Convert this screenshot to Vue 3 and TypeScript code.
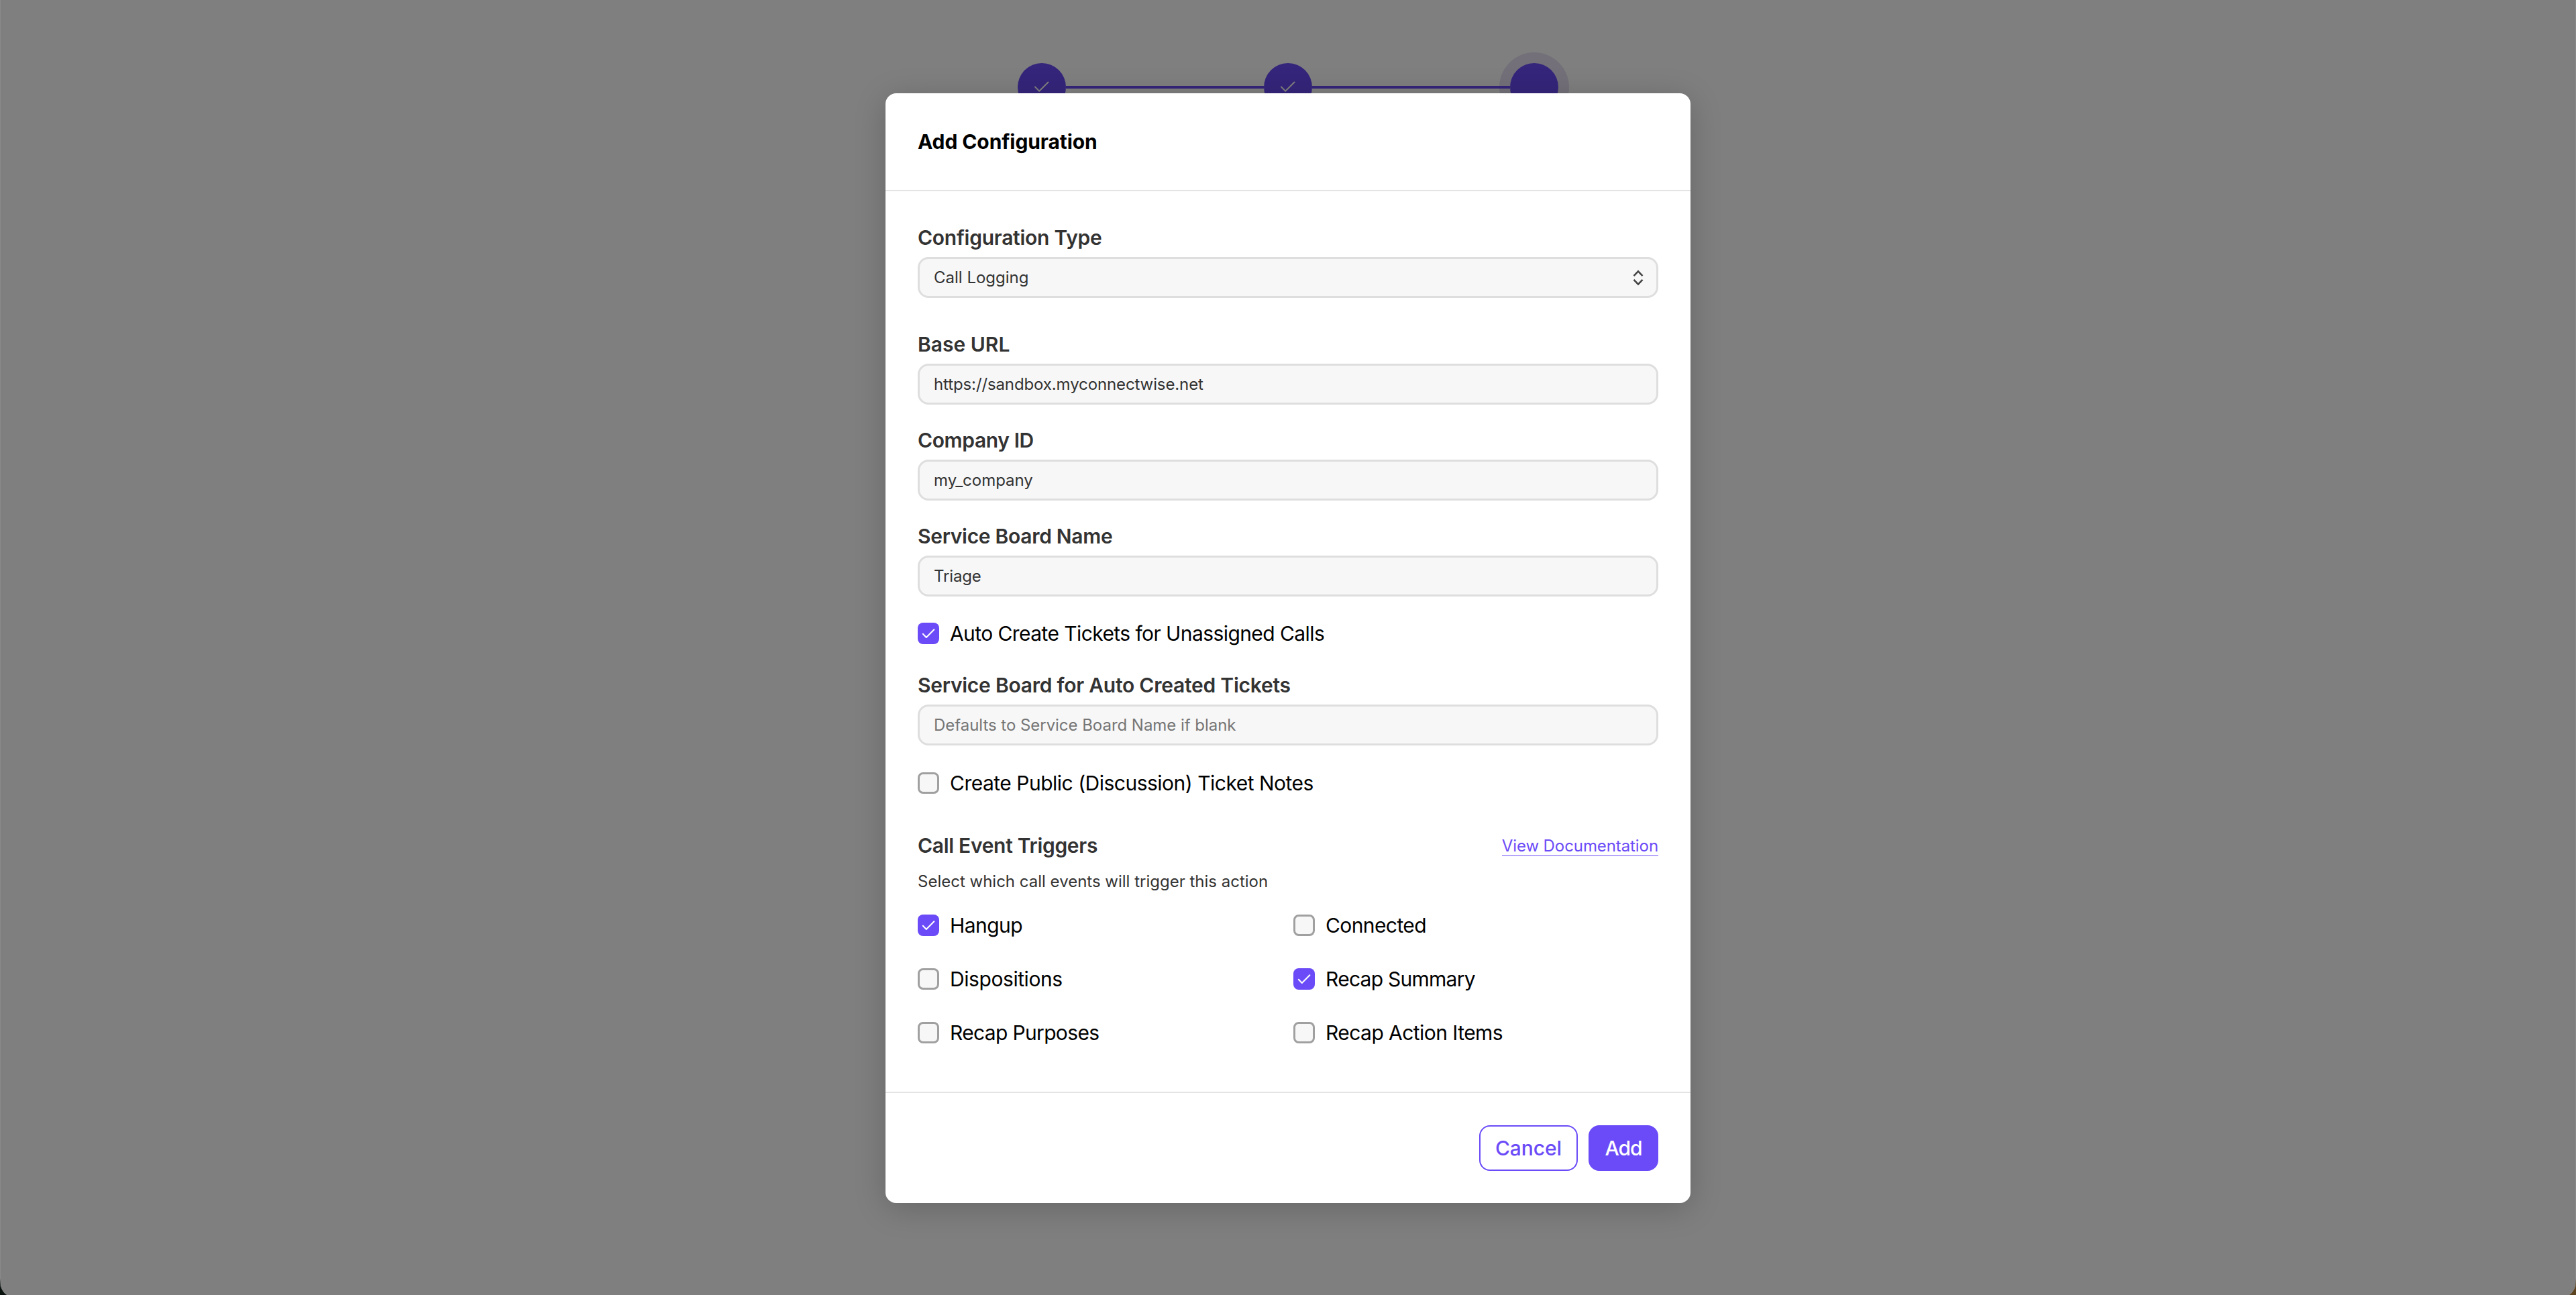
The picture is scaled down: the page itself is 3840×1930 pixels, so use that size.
<script setup lang="ts">
import { reactive } from 'vue'

interface Field {
  id: string
  label: string
  labelTracking: number
  value: string
  valueTracking: number
}

interface Option {
  label: string
  tracking: number
  checked: boolean
}

const steps = [
  { done: true, current: false },
  { done: true, current: false },
  { done: false, current: true },
]

const fields = reactive<Field[]>([
  { id: 'base-url', label: 'Base URL', labelTracking: 0, value: 'https://sandbox.myconnectwise.net', valueTracking: -0.116 },
  { id: 'company', label: 'Company ID', labelTracking: -0.377, value: 'my_company', valueTracking: -0.03 },
  { id: 'board', label: 'Service Board Name', labelTracking: -0.292, value: 'Triage', valueTracking: -0.15 },
])

const autoCreate = reactive<Option>({ label: 'Auto Create Tickets for Unassigned Calls', tracking: -0.58, checked: true })
const publicNotes = reactive<Option>({ label: 'Create Public (Discussion) Ticket Notes', tracking: -0.502, checked: false })

const triggers = reactive<Option[]>([
  { label: 'Hangup', tracking: -0.561, checked: true },
  { label: 'Connected', tracking: -0.6, checked: false },
  { label: 'Dispositions', tracking: -0.427, checked: false },
  { label: 'Recap Summary', tracking: -0.741, checked: true },
  { label: 'Recap Purposes', tracking: -0.66, checked: false },
  { label: 'Recap Action Items', tracking: -0.56, checked: false },
])

const track = (px: number) => ({ letterSpacing: `${px}px` })
const toggle = (option: Option) => {
  option.checked = !option.checked
}
</script>

<template>
  <div class="screen">
    <div class="window">
      <div class="stepper">
        <template v-for="(step, i) in steps" :key="i">
          <div v-if="i > 0" class="connector"></div>
          <div class="step" :class="{ current: step.current }">
            <svg v-if="step.done" width="72" height="72" viewBox="0 0 72 72">
              <path d="M26 35.5 L32.2 41.7 L45.5 28.5" />
            </svg>
          </div>
        </template>
      </div>

      <div class="overlay">
        <section class="modal" role="dialog" aria-modal="true">
          <header class="modal-header">
            <h2>Add Configuration</h2>
          </header>

          <div class="modal-body">
            <div class="field type-field">
              <div class="field-label" :style="track(-0.255)">Configuration Type</div>
              <div class="control">
                <span>Call Logging</span>
                <svg class="chevrons" width="16" height="24" viewBox="0 0 16 24">
                  <path d="M1.5 9.2 L8 2.4 L14.5 9.2 M1.5 14.8 L8 21.6 L14.5 14.8" />
                </svg>
              </div>
            </div>

            <div v-for="field in fields" :key="field.id" class="field">
              <label class="field-label" :for="field.id" :style="track(field.labelTracking)">{{ field.label }}</label>
              <input :id="field.id" v-model="field.value" class="control" type="text" :style="track(field.valueTracking)" />
            </div>

            <div class="option auto-option" @click="toggle(autoCreate)">
              <span class="box" :class="{ checked: autoCreate.checked }">
                <svg v-if="autoCreate.checked" width="32" height="32" viewBox="0 0 32 32"><path d="M7.8 16.8 L12.8 22 L24.4 10.2" /></svg>
              </span>
              <span class="option-label" :style="track(autoCreate.tracking)">{{ autoCreate.label }}</span>
            </div>

            <div class="field auto-field">
              <label class="field-label" for="auto-board" :style="track(-0.243)">Service Board for Auto Created Tickets</label>
              <input id="auto-board" class="control" type="text" placeholder="Defaults to Service Board Name if blank" :style="track(-0.04)" />
            </div>

            <div class="option" @click="toggle(publicNotes)">
              <span class="box" :class="{ checked: publicNotes.checked }">
                <svg v-if="publicNotes.checked" width="32" height="32" viewBox="0 0 32 32"><path d="M7.8 16.8 L12.8 22 L24.4 10.2" /></svg>
              </span>
              <span class="option-label" :style="track(publicNotes.tracking)">{{ publicNotes.label }}</span>
            </div>

            <div class="triggers-head">
              <div class="triggers-title">Call Event Triggers</div>
              <a class="doc-link">View Documentation</a>
            </div>
            <p class="hint">Select which call events will trigger this action</p>

            <div class="trigger-grid">
              <div v-for="option in triggers" :key="option.label" class="option" @click="toggle(option)">
                <span class="box" :class="{ checked: option.checked }">
                  <svg v-if="option.checked" width="32" height="32" viewBox="0 0 32 32"><path d="M7.8 16.8 L12.8 22 L24.4 10.2" /></svg>
                </span>
                <span class="option-label" :style="track(option.tracking)">{{ option.label }}</span>
              </div>
            </div>
          </div>

          <footer class="modal-footer">
            <button class="btn cancel" type="button">Cancel</button>
            <button class="btn add" type="button">Add</button>
          </footer>
        </section>
      </div>
    </div>
  </div>
</template>

<style>
html,
body {
  margin: 0;
  overflow: hidden;
}
</style>

<style scoped>
.screen {
  box-sizing: border-box;
  width: 3840px;
  height: 1930px;
  padding: 0 1px;
  overflow: hidden;
  font-family: Inter, "Liberation Sans", sans-serif;
  background:
    linear-gradient(to bottom, #8a8a8a 0, #8a8a8a 1905px, transparent 1920px),
    linear-gradient(to right, #0a120e 0, #0a120e 50%, #5c4420 50%);
}

.window {
  position: relative;
  height: 1933px;
  border-radius: 0 0 20px 20px;
  overflow: hidden;
  background: #fff;
}

.stepper {
  display: flex;
  justify-content: center;
  align-items: center;
  padding-top: 94px;
}

.step {
  width: 72px;
  height: 72px;
  border-radius: 50%;
  background: #6b4bf7;
}

.step.current {
  box-shadow: 0 0 0 16px #e6e1f2;
}

.step svg {
  display: block;
}

.step path,
.box path {
  fill: none;
  stroke: #fff;
  stroke-width: 2;
  stroke-linecap: round;
  stroke-linejoin: round;
}

.connector {
  position: relative;
  z-index: 1;
  width: 295px;
  height: 4px;
  background: #6b4bf7;
}

.overlay {
  position: absolute;
  inset: 0;
  z-index: 2;
  display: flex;
  justify-content: center;
  align-items: flex-start;
  padding-top: 139px;
  background: rgba(0, 0, 0, 0.5);
}

.modal {
  width: 1200px;
  border-radius: 16px;
  background: #fff;
  box-shadow: 0 8px 48px rgba(0, 0, 0, 0.2);
}

.modal-header {
  display: flex;
  align-items: center;
  height: 144px;
  padding: 0 48px;
  border-bottom: 2px solid #e4e4e4;
}

h2 {
  margin: 0;
  font-size: 30px;
  line-height: 42px;
  font-weight: 700;
  letter-spacing: -0.093px;
  color: #000;
}

.modal-body {
  padding: 48px 48px 72px;
}

.field {
  margin-bottom: 32px;
}

.type-field {
  margin-bottom: 48px;
}

.field-label,
.triggers-title {
  display: block;
  font-size: 30px;
  line-height: 42px;
  font-weight: 600;
  color: #333;
}

.field-label {
  margin-bottom: 8px;
}

.control {
  box-sizing: border-box;
  display: flex;
  align-items: center;
  justify-content: space-between;
  width: 100%;
  height: 61px;
  margin: 0;
  padding: 0 20px 0 21px;
  border: 3px solid #dedede;
  border-radius: 16px;
  outline: none;
  background: #f7f7f7;
  font-family: inherit;
  font-size: 24px;
  line-height: 32px;
  color: #333;
}

.control::placeholder {
  color: #757575;
  opacity: 1;
}

.chevrons {
  margin-right: -1px;
}

.chevrons path {
  fill: none;
  stroke: #444;
  stroke-width: 2.5;
}

.option {
  display: flex;
  align-items: center;
  gap: 16px;
  height: 32px;
}

.auto-option {
  margin: 39px 0 40px;
}

.auto-field {
  margin-bottom: 40px;
}

.box {
  box-sizing: border-box;
  flex: none;
  width: 32px;
  height: 32px;
  border: 3px solid #a0a0a0;
  border-radius: 8px;
  background: #f7f7f7;
}

.box.checked {
  border: 0;
  background: #6b4bf7;
}

.box svg {
  display: block;
}

.option-label {
  font-size: 30px;
  line-height: 32px;
  color: #000;
  white-space: nowrap;
}

.triggers-head {
  display: flex;
  justify-content: space-between;
  align-items: flex-start;
  margin-top: 56px;
}

.triggers-title {
  letter-spacing: -0.305px;
}

.doc-link {
  margin-top: 8px;
  border-bottom: 1px solid #6b4bf7;
  font-size: 24px;
  line-height: 28px;
  letter-spacing: -0.084px;
  color: #6b4bf7;
}

.hint {
  margin: 17px 0 33px;
  font-size: 24px;
  line-height: 32px;
  color: #333;
}

.trigger-grid {
  display: grid;
  grid-template-columns: 1fr 1fr;
  gap: 48px 16px;
}

.modal-footer {
  display: flex;
  justify-content: flex-end;
  gap: 16px;
  padding: 48px;
  border-top: 2px solid #e4e4e4;
}

.btn {
  box-sizing: border-box;
  height: 68px;
  padding: 0;
  border: 2px solid #6b4bf7;
  border-radius: 16px;
  font-family: inherit;
  font-size: 30px;
  line-height: 40px;
  font-weight: 500;
}

.cancel {
  width: 147px;
  background: #fff;
  color: #6b4bf7;
  letter-spacing: -0.064px;
}

.add {
  width: 104px;
  background: #6b4bf7;
  color: #fff;
  letter-spacing: -1.1px;
}
</style>
